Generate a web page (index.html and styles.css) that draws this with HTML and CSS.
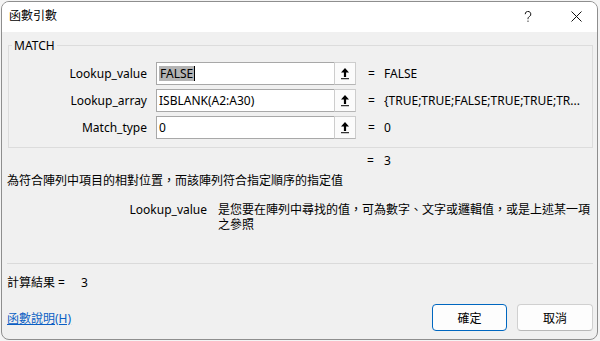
FILE: index.html
```html
<!DOCTYPE html>
<html lang="zh-Hant">
<head>
  <meta charset="UTF-8" />
  <title>函數引數</title>
  <link rel="stylesheet" href="styles.css">
</head>
<body>

  <div class="dialog">
    <div class="titlebar">
      <span class="title">函數引數</span>
      <svg class="help-icon" width="8" height="11" viewBox="0 0 8 11">
        <path d="M1.2 3.2 A2.8 2.8 0 1 1 5.4 5.6 C4.4 6.2 4 6.8 4 7.8 V8.2" fill="none" stroke="#111" stroke-width="1"/>
        <rect x="3.5" y="9.6" width="1" height="1.2" fill="#111"/>
      </svg>
      <svg class="close-icon" width="11" height="11" viewBox="0 0 11 11">
        <path d="M0.5 0.5 L10.5 10.5 M10.5 0.5 L0.5 10.5" stroke="#111" stroke-width="1"/>
      </svg>
    </div>

    <div class="body">
      <fieldset class="group">
        <legend>MATCH</legend>

        <div class="arg-row">
          <span class="arg-name">Lookup_value</span>
          <div class="arg-input"><span class="sel">FALSE</span><span class="caret"></span></div>
          <button class="ref-btn">
            <svg width="10" height="13" viewBox="0 0 10 13"><path d="M5 1 L9 5.5 L6.1 5.5 L6.1 10 L3.9 10 L3.9 5.5 L1 5.5 Z" fill="#000"/><rect x="1" y="11.2" width="8" height="1" fill="#000"/></svg>
          </button>
          <span class="eq">=</span>
          <span class="arg-val">FALSE</span>
        </div>

        <div class="arg-row">
          <span class="arg-name">Lookup_array</span>
          <div class="arg-input">ISBLANK(A2:A30)</div>
          <button class="ref-btn">
            <svg width="10" height="13" viewBox="0 0 10 13"><path d="M5 1 L9 5.5 L6.1 5.5 L6.1 10 L3.9 10 L3.9 5.5 L1 5.5 Z" fill="#000"/><rect x="1" y="11.2" width="8" height="1" fill="#000"/></svg>
          </button>
          <span class="eq">=</span>
          <span class="arg-val">{TRUE;TRUE;FALSE;TRUE;TRUE;TR...</span>
        </div>

        <div class="arg-row">
          <span class="arg-name">Match_type</span>
          <div class="arg-input">0</div>
          <button class="ref-btn">
            <svg width="10" height="13" viewBox="0 0 10 13"><path d="M5 1 L9 5.5 L6.1 5.5 L6.1 10 L3.9 10 L3.9 5.5 L1 5.5 Z" fill="#000"/><rect x="1" y="11.2" width="8" height="1" fill="#000"/></svg>
          </button>
          <span class="eq">=</span>
          <span class="arg-val">0</span>
        </div>
      </fieldset>

      <div class="result-line"><span class="eq-plain">=</span><span class="result-val">3</span></div>

      <div class="func-desc">為符合陣列中項目的相對位置，而該陣列符合指定順序的指定值</div>

      <div class="param-help">
        <span class="param-name">Lookup_value</span>
        <span class="param-text">是您要在陣列中尋找的值，可為數字、文字或邏輯值，或是上述某一項之參照</span>
      </div>

      <div class="separator"></div>

      <div class="calc-line">計算結果 =<span class="calc-val">3</span></div>

      <div class="footer">
        <a class="help-link" href="#">函數說明(H)</a>
        <button class="btn btn-ok">確定</button>
        <button class="btn">取消</button>
      </div>
    </div>
  </div>

</body>
</html>
```

FILE: styles.css
```css
body {
  margin: 0;
  background: #f4f4f4;
  font-family: "Noto Sans", "Noto Sans CJK TC", sans-serif;
  font-size: 12px;
  color: #000;
}

.dialog {
  margin: 1px 0 0 1px;
  width: 597px;
  height: 339px;
  box-sizing: border-box;
  border: 1px solid #8e8e8e;
  border-radius: 8px;
  overflow: hidden;
  background: #f0f0f0;
  display: flex;
  flex-direction: column;
}

.titlebar {
  height: 30px;
  flex: none;
  box-sizing: border-box;
  background: #fff;
  display: flex;
  align-items: center;
  padding: 0 15px 2px 7px;
}

.title {
  line-height: 16px;
}

.help-icon {
  margin-left: auto;
}

.close-icon {
  margin-left: 39px;
}

.body {
  flex: 1;
  display: flex;
  flex-direction: column;
  padding: 0 4px 0 5px;
}

.group {
  margin: 5px 0 0 1px;
  padding: 8px 0 8px 3px;
  border: 1px solid #dcdcdc;
  min-inline-size: 0;
  display: flex;
  flex-direction: column;
  gap: 4px;
}

.group legend {
  padding: 0 2px;
  line-height: 17px;
}

.arg-row {
  display: flex;
  align-items: center;
  height: 23px;
}

.arg-name {
  width: 135px;
  margin-right: 9px;
  text-align: right;
  white-space: nowrap;
}

.arg-input {
  width: 179px;
  height: 23px;
  box-sizing: border-box;
  border: 1px solid #a8a8a8;
  background: #fff;
  padding-left: 2px;
  display: flex;
  align-items: center;
  white-space: nowrap;
}

.sel {
  background: #b4b4b4;
  padding: 0 1px;
  line-height: 15px;
}

.caret {
  width: 1px;
  height: 15px;
  background: #000;
}

.ref-btn {
  width: 22px;
  height: 23px;
  margin: 0 0 0 -1px;
  padding: 0;
  box-sizing: border-box;
  border: 1px solid #cdcdcd;
  border-bottom-color: #b5b5b5;
  background: #fbfbfb;
  display: flex;
  align-items: center;
  justify-content: center;
}

.eq {
  width: 7px;
  margin-left: 12px;
}

.arg-val {
  margin-left: 9px;
  white-space: nowrap;
  overflow: hidden;
}

.result-line {
  margin-top: 5px;
  padding-left: 360px;
  line-height: 16px;
}

.eq-plain {
  display: inline-block;
  width: 7px;
}

.result-val {
  margin-left: 10px;
}

.func-desc {
  margin-top: 4px;
  line-height: 16px;
}

.param-help {
  margin-top: 13px;
  display: flex;
  line-height: 15px;
}

.param-name {
  width: 200px;
  margin-right: 11px;
  text-align: right;
  flex: none;
}

.param-text {
  width: 374px;
}

.separator {
  margin-top: 31px;
  height: 1px;
  background: #dadada;
}

.calc-line {
  margin-top: 11px;
  line-height: 16px;
}

.calc-val {
  margin-left: 16px;
}

.footer {
  margin-top: 13px;
  display: flex;
  align-items: center;
  gap: 10px;
}

.help-link {
  margin-right: auto;
  color: #0b5fc4;
  text-decoration: underline;
}

.btn {
  width: 76px;
  height: 27px;
  padding: 0;
  font-family: inherit;
  font-size: 12px;
  color: #000;
  background: #fdfdfd;
  border: 1px solid #d0d0d0;
  border-bottom-color: #b8b8b8;
  border-radius: 4px;
}

.btn-ok {
  width: 75px;
  border: 1px solid #0067c0;
}
```
